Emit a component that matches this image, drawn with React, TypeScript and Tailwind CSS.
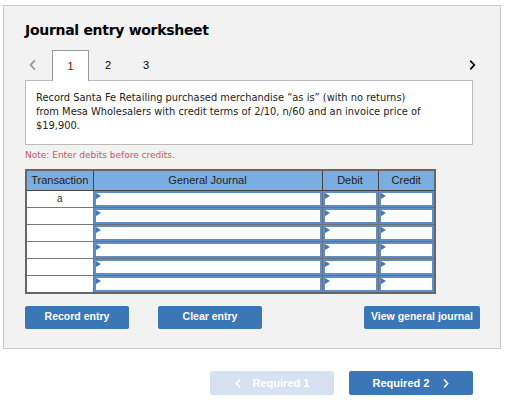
import React from "react";

const rows = ["a", "", "", "", "", ""];
const arial = { fontFamily: "'Liberation Sans', Arial, sans-serif" };

function Chevron({ dir, className = "" }: { dir: "left" | "right"; className?: string }) {
  return (
    <svg viewBox="0 0 8 12" className={className} fill="none" stroke="currentColor" strokeWidth="2" strokeLinecap="square">
      {dir === "left" ? <path d="M6 1.5 1.8 6 6 10.5" /> : <path d="M2 1.5 6.2 6 2 10.5" />}
    </svg>
  );
}

function Cell() {
  return (
    <td className="border border-[#6f6f6f] p-0">
      <div className="relative h-[16px] border-2 border-[#5f8dc6] bg-white">
        <span className="absolute left-0 top-0 h-0 w-0 border-y-[3px] border-l-[5px] border-y-transparent border-l-[#3f78c0]" />
      </div>
    </td>
  );
}

export default function App() {
  return (
    <div className="min-h-[412px] w-[508px] bg-white" style={{ fontFamily: "'DejaVu Sans', Verdana, sans-serif" }}>
      <div className="ml-[3px] pt-[5px]">
        <div className="h-[344px] w-[498px] border border-[#c8c8c8] bg-[#f2f2f2] pl-[21px] pt-[14px]">
          <h1 className="text-[14px] font-bold leading-[20px] tracking-[-0.3px] text-black">Journal entry worksheet</h1>

          {/* tabs */}
          <div className="mt-[10px] flex h-[30px] items-center">
            <span className="flex w-[27px] pl-[4px]">
              <Chevron dir="left" className="h-[12px] w-[7px] text-[#9a9a9a]" />
            </span>
            <div className="relative z-10 flex h-[31px] w-[37px] items-center justify-center self-start border border-b-0 border-[#999] bg-white text-[11px] text-[#800000]" style={arial}>
              1
            </div>
            <span className="w-[38px] text-center text-[11px] text-black" style={arial}>2</span>
            <span className="w-[38px] text-center text-[11px] text-black" style={arial}>3</span>
            <span className="ml-auto mr-[24px] flex">
              <Chevron dir="right" className="h-[10px] w-[7px] text-black" />
            </span>
          </div>

          <div className="h-[65px] w-[448px] border border-[#bbb] bg-white px-[10px] pt-[10px] text-[9.9px] leading-[14px] text-[#222]">
            Record Santa Fe Retailing purchased merchandise “as is” (with no returns)
            <br />
            from Mesa Wholesalers with credit terms of 2/10, n/60 and an invoice price of
            <br />
            $19,900.
          </div>

          <p className="mt-[4px] text-[9px] leading-[12px] text-[#c25b5b]">Note: Enter debits before credits.</p>

          <table className="mt-[8px] w-[410px] table-fixed border-collapse border-2 border-[#666]" style={arial}>
            <colgroup>
              <col className="w-[67px]" />
              <col className="w-[229px]" />
              <col className="w-[56px]" />
              <col className="w-[57px]" />
            </colgroup>
            <thead>
              <tr className="h-[20px] bg-[#7aade2] text-[11px] text-[#222]">
                <th className="border border-[#444] font-normal">Transaction</th>
                <th className="border border-[#444] font-normal">General Journal</th>
                <th className="border border-[#444] font-normal">Debit</th>
                <th className="border border-[#444] font-normal">Credit</th>
              </tr>
            </thead>
            <tbody>
              {rows.map((r, i) => (
                <tr key={i} className="h-[17px]">
                  <td className="border border-[#777] bg-white p-0 text-center text-[10px] leading-[15px] text-[#333]">{r}</td>
                  <Cell />
                  <Cell />
                  <Cell />
                </tr>
              ))}
            </tbody>
          </table>

          <div className="mt-[12px] flex w-[455px] text-[10.5px] font-bold text-white" style={arial}>
            <button className="h-[23px] w-[104px] rounded-[2px] bg-[#3b76b7]">Record entry</button>
            <button className="ml-[29px] h-[23px] w-[104px] rounded-[2px] bg-[#3b76b7]">Clear entry</button>
            <button className="ml-auto h-[23px] w-[116px] rounded-[2px] bg-[#3b76b7]">View general journal</button>
          </div>
        </div>
      </div>

      <div className="mt-[22px] flex gap-[15px] pl-[210px] text-[11px] font-bold text-white" style={arial}>
        <button className="flex h-[24px] w-[124px] items-center justify-center gap-[12px] rounded-[2px] bg-[#d6e2f1]">
          <Chevron dir="left" className="h-[9px] w-[6px]" />
          <span>Required 1</span>
        </button>
        <button className="flex h-[24px] w-[124px] items-center justify-center gap-[14px] rounded-[2px] bg-[#3b76b7]">
          <span>Required 2</span>
          <Chevron dir="right" className="h-[9px] w-[6px]" />
        </button>
      </div>
    </div>
  );
}
